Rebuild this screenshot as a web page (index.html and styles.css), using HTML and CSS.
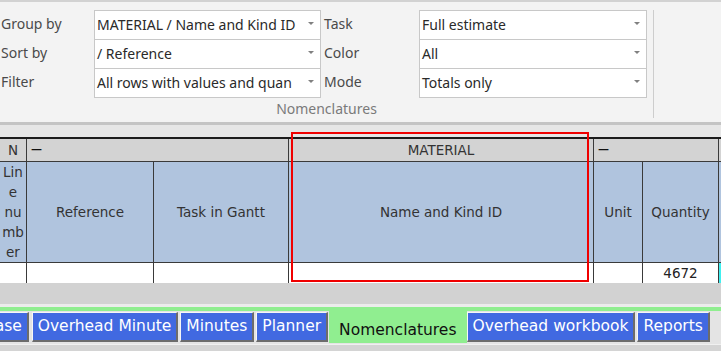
FILE: index.html
```html
<!DOCTYPE html>
<html lang="en">
<head>
<meta charset="UTF-8">
<title>Nomenclatures</title>
<link rel="stylesheet" href="styles.css">
</head>
<body>
<div class="ribbon">
  <div class="group">
    <div class="fields">
      <span class="label">Group by</span>
      <div class="combo"><span class="value">MATERIAL / Name and Kind ID</span></div>
      <span class="label label-2">Task</span>
      <div class="combo"><span class="value">Full estimate</span></div>

      <span class="label">Sort by</span>
      <div class="combo"><span class="value">/ Reference</span></div>
      <span class="label label-2">Color</span>
      <div class="combo"><span class="value">All</span></div>

      <span class="label">Filter</span>
      <div class="combo"><span class="value">All rows with values and quan</span></div>
      <span class="label label-2">Mode</span>
      <div class="combo"><span class="value">Totals only</span></div>
    </div>
    <div class="caption">Nomenclatures</div>
  </div>
  <div class="sep"></div>
</div>

<div class="sheet">
  <div class="path"></div>
  <div class="grid">
    <!-- group header row -->
    <div class="hd">N</div>
    <div class="hd dash span-2">&mdash;</div>
    <div class="hd">MATERIAL</div>
    <div class="hd dash span-2">&mdash;</div>
    <div class="hd"></div>

    <!-- column titles -->
    <div class="col-title line-no">Lin<br>e<br>nu<br>mb<br>er</div>
    <div class="col-title">Reference</div>
    <div class="col-title">Task in Gantt</div>
    <div class="col-title">Name and Kind ID</div>
    <div class="col-title">Unit</div>
    <div class="col-title">Quantity</div>
    <div class="col-title"></div>

    <!-- totals row -->
    <div class="cell"></div>
    <div class="cell"></div>
    <div class="cell"></div>
    <div class="cell"></div>
    <div class="cell"></div>
    <div class="cell">4672</div>
    <div class="cell cyan"></div>
  </div>
  <div class="hscroll"></div>
  <div class="highlight"></div>
</div>

<div class="tabbar">
  <div class="tab first">Base</div>
  <div class="tab">Overhead Minute</div>
  <div class="tab">Minutes</div>
  <div class="tab">Planner</div>
  <div class="tab active">Nomenclatures</div>
  <div class="tab">Overhead workbook</div>
  <div class="tab">Reports</div>
</div>
<div class="footer"></div>
</body>
</html>
```

FILE: styles.css
```css
html, body {
  margin: 0;
  width: 721px;
  height: 351px;
  overflow: hidden;
}
body {
  background-color: #d4d4d4;
  font-family: "DejaVu Sans", sans-serif;
  color: #333;
}

/* Ribbon group with the view settings */
.ribbon {
  display: flex;
  height: 120px;
  background-color: #f3f3f3;
  border-top: 2px solid #d2d2d2;
  border-bottom: 3px solid #c4c4c4;
  font-family: "Noto Sans", sans-serif;
  font-size: 14px;
}
.group {
  padding-top: 8px;
}
.fields {
  display: grid;
  grid-template-columns: 94px 227px 98px 228px;
  grid-auto-rows: 29px;
  align-items: start;
}
.label {
  height: 29px;
  line-height: 28px;
  padding-left: 1px;
  color: #4a4a4a;
}
.label-2 {
  padding-left: 3px;
}
.combo {
  display: flex;
  align-items: center;
  height: 30px;
  box-sizing: border-box;
  padding-bottom: 1px;
  background-color: #fff;
  border: 1px solid #c8c8c8;
  color: #2a2a2a;
}
.combo .value {
  flex: 1;
  overflow: hidden;
  white-space: nowrap;
  padding-left: 2px;
}
.combo::after {
  content: "";
  width: 0;
  height: 0;
  margin: 0 6px 2px 6px;
  border-left: 3px solid transparent;
  border-right: 3px solid transparent;
  border-top: 3px solid #808080;
}
.caption {
  height: 20px;
  padding-top: 2px;
  line-height: 20px;
  text-align: center;
  color: #7a7a7a;
  padding-left: 6px;
}
.sep {
  width: 1px;
  margin: 8px 0 4px 6px;
  background-color: #cdcdcd;
}

/* Sheet area */
.sheet {
  position: relative;
  overflow: hidden;
}
.path {
  height: 12px;
  background-color: #e6e6e6;
}
.grid {
  display: grid;
  grid-template-columns: 26px 126px 134px 304px 48px 75px 40px;
  grid-template-rows: 22px 100px 20px;
  gap: 1px;
  width: max-content;
  background-color: #3a3a3a;
  border-top: 2px solid #1c1c1c;
  font-size: 13.5px;
}
.hd {
  background-color: #d3d3d3;
  line-height: 22px;
  text-align: center;
}
.hd.dash {
  text-align: left;
  padding-left: 4px;
  font-size: 11px;
  font-weight: bold;
  color: #111;
}
.span-2 {
  grid-column: span 2;
}
.col-title {
  display: flex;
  align-items: center;
  justify-content: center;
  background-color: #b0c4de;
}
.col-title.line-no {
  line-height: 20px;
  text-align: center;
}
.cell {
  background-color: #fff;
  line-height: 20px;
  text-align: center;
  color: #222;
}
.cell.cyan {
  background-color: #40f0f0;
}
.hscroll {
  height: 21px;
  background-color: #d2d2d2;
  border-bottom: 3px solid #ececec;
}
.highlight {
  position: absolute;
  left: 291px;
  top: 7px;
  width: 294px;
  height: 146px;
  border: 2px solid #f00000;
}

/* Worksheet tabs */
.tabbar {
  display: flex;
  align-items: flex-start;
  height: 33px;
  background-color: #e4e4e4;
  border-top: 4px solid #90ee90;
}
.tab {
  height: 30px;
  box-sizing: border-box;
  margin: 1px 2px 0 0;
  padding: 0 5px;
  background-color: #4169e1;
  color: #fff;
  font-size: 15.5px;
  line-height: 27px;
  white-space: nowrap;
  border-top: 1px solid #f6f6f6;
  border-left: 1px solid #f6f6f6;
  border-right: 2px solid #6c6c6c;
  border-bottom: 2px solid #6c6c6c;
}
.tab.first {
  margin-left: -22px;
  margin-right: 3px;
}
.tab.active {
  height: 36px;
  margin: -4px 0 0 -1px;
  padding: 11px 10px 0 10px;
  font-size: 15.5px;
  line-height: 24px;
  background-color: #90ee90;
  color: #111;
  border: none;
}
.footer {
  height: 7px;
  border-top: 1px solid #f0f0f0;
}
```
